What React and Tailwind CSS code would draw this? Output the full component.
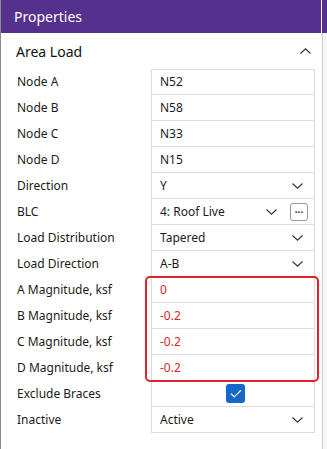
import { Check } from "lucide-react";

const rows = [
  { label: "Node A", value: "N52" },
  { label: "Node B", value: "N58" },
  { label: "Node C", value: "N33" },
  { label: "Node D", value: "N15" },
  { label: "Direction", value: "Y", select: true },
  { label: "BLC", value: "4: Roof Live", select: true, more: true },
  { label: "Load Distribution", value: "Tapered", select: true },
  { label: "Load Direction", value: "A-B", select: true },
  { label: "A Magnitude, ksf", value: "0", red: true },
  { label: "B Magnitude, ksf", value: "-0.2", red: true },
  { label: "C Magnitude, ksf", value: "-0.2", red: true },
  { label: "D Magnitude, ksf", value: "-0.2", red: true },
  { label: "Exclude Braces", check: true },
  { label: "Inactive", value: "Active", select: true },
];

function Chevron({ up }) {
  return (
    <svg width="11" height="6" viewBox="0 0 11 6" className="text-[#333]">
      <polyline points={up ? "0.5,5.5 5.5,0.8 10.5,5.5" : "0.5,0.5 5.5,5.2 10.5,0.5"} fill="none" stroke="currentColor" strokeWidth="1.1" />
    </svg>
  );
}

function Row({ row, first }) {
  return (
    <div className="flex h-[26px]">
      <div className="flex w-[150px] items-center pl-[16px] text-[12px] text-[#1b1b1b]">{row.label}</div>
      <div className={`flex w-[164px] items-center border-x border-b border-[#dcdcdc] pl-[8px] pr-[11px] ${first ? "border-t" : ""}`}>
        {row.check ? (
          <div className="ml-[66px] grid h-[19px] w-[19px] place-items-center rounded-[3px] bg-[#1667c9]">
            <Check size={14} strokeWidth={2} className="text-white" />
          </div>
        ) : (
          <span className={`flex-1 text-[12px] ${row.red ? "text-[#d9262b]" : "text-[#1b1b1b]"}`}>{row.value}</span>
        )}
        {row.select && <Chevron />}
        {row.more && (
          <div className="ml-[13px] -mr-[5px] flex h-[18px] w-[18px] items-center justify-center rounded-[3px] border border-[#9a9a9a] text-[10px] font-bold leading-none text-[#333]">
            ···
          </div>
        )}
      </div>
    </div>
  );
}

export default function App() {
  return (
    <div className="flex h-[449px] w-[327px] overflow-hidden bg-white font-['Noto_Sans',sans-serif]">
      <div className="relative w-[321px] border-l border-[#8c8c8c]">
        <div className="flex h-[33px] items-center bg-[#55308d] pl-[13px] text-[14px] text-white">Properties</div>
        <div className="flex h-[36px] items-center justify-between pl-[15px] pr-[10px]">
          <span className="text-[14px] text-[#111]">Area Load</span>
          <Chevron up />
        </div>
        <div>
          {rows.map((r, i) => (
            <Row key={r.label} row={r} first={i === 0} />
          ))}
        </div>
        <div className="pointer-events-none absolute left-[144px] top-[276px] h-[106px] w-[174px] rounded-[5px] border-2 border-[#e0202a]" />
      </div>
      <div className="w-[1px] bg-white" />
      <div className="flex w-[5px] flex-col">
        <div className="h-[33px] bg-[#55308d]" />
        <div className="flex-1 border-l border-[#d0d0d0] bg-[#f7f7f7]" />
      </div>
    </div>
  );
}
